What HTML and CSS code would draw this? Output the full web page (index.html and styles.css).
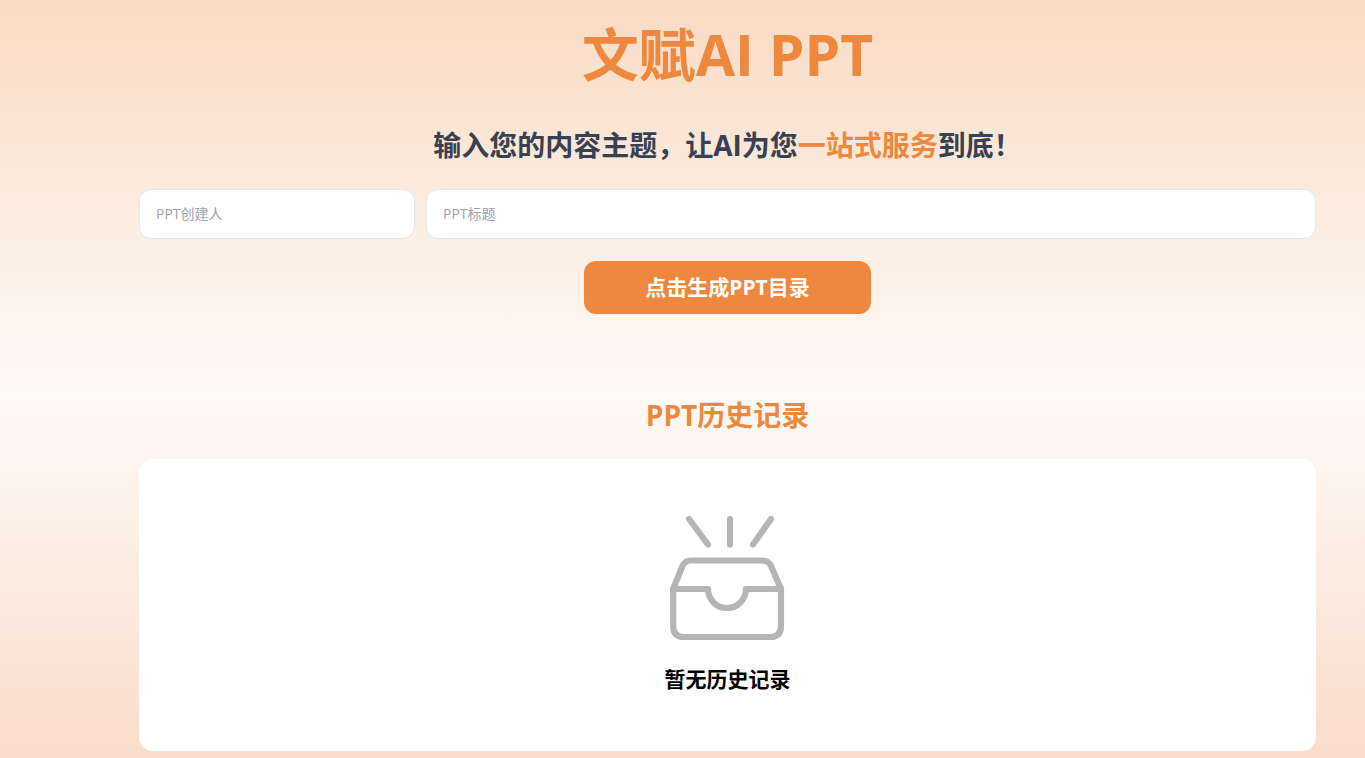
FILE: index.html
```html
<!DOCTYPE html>
<html lang="zh-CN">
<head>
    <meta charset="UTF-8">
    <meta name="viewport" content="width=device-width, initial-scale=1.0">
    <title>文赋AI PPT</title>
    <link rel="stylesheet" href="styles.css">
</head>
<body>
    <main class="container">
        <h1 class="title">文赋AI PPT</h1>
        <p class="subtitle">输入您的内容主题，让AI为您<span class="highlight">一站式服务</span>到底！</p>

        <form class="ppt-form">
            <div class="input-row">
                <input type="text" class="input-author" placeholder="PPT创建人" aria-label="PPT创建人">
                <input type="text" class="input-title" placeholder="PPT标题" aria-label="PPT标题">
            </div>
            <button type="button" class="generate-btn">点击生成PPT目录</button>
        </form>

        <h2 class="history-title">PPT历史记录</h2>
        <section class="history-card">
            <svg class="empty-icon" width="116" height="126" viewBox="0 0 116 126" fill="none" stroke="#b5b5b5" stroke-width="6.2" stroke-linecap="round" stroke-linejoin="round" aria-hidden="true">
                <path d="M19 4 L38 29.5"/>
                <path d="M60 4 V29.5"/>
                <path d="M101 4 L83 29.5"/>
                <path d="M3.2 74 L12.5 51 Q15 45.5 20.5 45.5 H92 Q98.5 45.5 101 51 L111 74"/>
                <path d="M3.2 74 V111 Q3.2 122 14 122 H100 Q111 122 111 111 V74"/>
                <path d="M3.2 74 H38 A19 19 0 0 0 76 74 H111"/>
            </svg>
            <p class="empty-text">暂无历史记录</p>
        </section>
    </main>
</body>
</html>
```

FILE: styles.css
```css
:root {
    --primary: #ed883e;
    --text: #374151;
    --border: #e5e7eb;
    --peach: #f9dbc5;
}

* {
    box-sizing: border-box;
    font-family: "Open Sans", "Noto Sans CJK SC", sans-serif;
}

body {
    margin: 0;
    min-height: 100vh;
    background: linear-gradient(to bottom, var(--peach), #fefaf6 52%, #f9dccb);
}

.container {
    margin-left: 90px;
    padding: 14px 49px 7px;
    text-align: center;
}

.title {
    margin: 0;
    font-size: 57px;
    line-height: 80px;
    color: var(--primary);
}

.subtitle {
    margin: 30px 0 23px;
    font-size: 28px;
    font-weight: 700;
    line-height: 42px;
    color: var(--text);
}

.highlight {
    color: var(--primary);
}

.input-row {
    display: flex;
    gap: 11px;
    margin-bottom: 22px;
}

.input-row input {
    height: 50px;
    min-width: 0;
    padding: 0 16px 2px;
    border: 1px solid var(--border);
    border-radius: 12px;
    background: white;
    font-size: 14px;
}

.input-row input::placeholder {
    color: #9ca3af;
}

.input-author {
    flex: 0 0 276px;
}

.input-title {
    flex: 1;
}

.generate-btn {
    width: 287px;
    height: 53px;
    padding: 0 16px 4px;
    border: none;
    border-radius: 12px;
    background: var(--primary);
    color: white;
    font-size: 21px;
    font-weight: 700;
}

.history-title {
    margin: 80px 0 23px;
    font-size: 28px;
    line-height: 42px;
    color: var(--primary);
}

.history-card {
    display: flex;
    flex-direction: column;
    align-items: center;
    padding: 56px 16px;
    border-radius: 14px;
    background: white;
}

.empty-text {
    margin: 22px 0 0;
    font-size: 21px;
    font-weight: 700;
    line-height: 32px;
}
```
